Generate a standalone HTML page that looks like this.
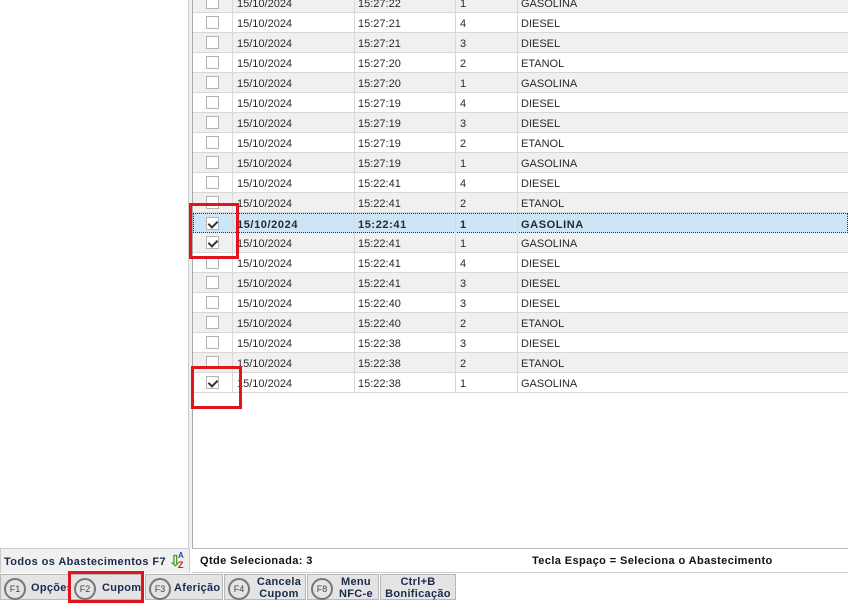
<!DOCTYPE html>
<html><head><meta charset="utf-8"><style>
*{margin:0;padding:0;box-sizing:border-box}
body{width:848px;height:600px;overflow:hidden;background:#fff;font-family:"Liberation Sans",Tahoma,sans-serif;font-size:11px;color:#2a2a2a;position:relative}
.abs{position:absolute}
.row{position:absolute;left:193px;width:655px;height:20px;border-bottom:1px solid #d8d8d8}
.row div{position:absolute;top:0;height:20px;line-height:22px;border-right:1px solid #d8d8d8}
.c0{left:0;width:40px}.c1{left:40px;width:122px;padding-left:4px}.c2{left:162px;width:101px;padding-left:3px}.c3{left:263px;width:62px;padding-left:4px}.c4{left:325px;width:330px;padding-left:3px;border-right:none!important}
.cb{position:absolute;left:13px;top:3px;width:13px;height:13px;border:1px solid #b4b4b4;background:#fff}
.chk::after{content:"";position:absolute;left:3px;top:1px;width:4px;height:7px;border:solid #333;border-width:0 2px 2px 0;transform:rotate(45deg)}
.sel{background:#cde6f7;font-weight:bold;border:1px dotted #333;letter-spacing:0.6px}
.b{font-weight:bold;letter-spacing:0.4px}
.red{position:absolute;border:3px solid #e0141a}
.btn{position:absolute;top:574px;height:26px;background:#e4e4e4;border:1px solid #b8b8b8;font-weight:bold;color:#1a2a4a;font-size:11px;letter-spacing:0.3px}
.k{position:absolute;top:3px;left:3px;width:22px;height:22px;border:2px solid #777;border-radius:50%;font-weight:normal;font-size:9px;line-height:18px;text-align:center;color:#444;letter-spacing:0}
.lb{position:absolute;top:0;line-height:27px}
.lb2{position:absolute;top:0;line-height:12px;text-align:center;padding-top:1px}
</style></head><body>
<div class="abs" style="left:0;top:0;width:189px;height:548px;background:#fff;border-right:1px solid #ccc"></div>
<div class="abs" style="left:189px;top:0;width:4px;height:548px;background:#f0f0f0;border-right:1px solid #aaa"></div>

<div class="row" style="top:-7px;background:#f0f0f0"><div class="c0"><span class="cb"></span></div><div class="c1">15/10/2024</div><div class="c2">15:27:22</div><div class="c3">1</div><div class="c4">GASOLINA</div></div>
<div class="row" style="top:13px"><div class="c0"><span class="cb"></span></div><div class="c1">15/10/2024</div><div class="c2">15:27:21</div><div class="c3">4</div><div class="c4">DIESEL</div></div>
<div class="row" style="top:33px;background:#f0f0f0"><div class="c0"><span class="cb"></span></div><div class="c1">15/10/2024</div><div class="c2">15:27:21</div><div class="c3">3</div><div class="c4">DIESEL</div></div>
<div class="row" style="top:53px"><div class="c0"><span class="cb"></span></div><div class="c1">15/10/2024</div><div class="c2">15:27:20</div><div class="c3">2</div><div class="c4">ETANOL</div></div>
<div class="row" style="top:73px;background:#f0f0f0"><div class="c0"><span class="cb"></span></div><div class="c1">15/10/2024</div><div class="c2">15:27:20</div><div class="c3">1</div><div class="c4">GASOLINA</div></div>
<div class="row" style="top:93px"><div class="c0"><span class="cb"></span></div><div class="c1">15/10/2024</div><div class="c2">15:27:19</div><div class="c3">4</div><div class="c4">DIESEL</div></div>
<div class="row" style="top:113px;background:#f0f0f0"><div class="c0"><span class="cb"></span></div><div class="c1">15/10/2024</div><div class="c2">15:27:19</div><div class="c3">3</div><div class="c4">DIESEL</div></div>
<div class="row" style="top:133px"><div class="c0"><span class="cb"></span></div><div class="c1">15/10/2024</div><div class="c2">15:27:19</div><div class="c3">2</div><div class="c4">ETANOL</div></div>
<div class="row" style="top:153px;background:#f0f0f0"><div class="c0"><span class="cb"></span></div><div class="c1">15/10/2024</div><div class="c2">15:27:19</div><div class="c3">1</div><div class="c4">GASOLINA</div></div>
<div class="row" style="top:173px"><div class="c0"><span class="cb"></span></div><div class="c1">15/10/2024</div><div class="c2">15:22:41</div><div class="c3">4</div><div class="c4">DIESEL</div></div>
<div class="row" style="top:193px;background:#f0f0f0"><div class="c0"><span class="cb"></span></div><div class="c1">15/10/2024</div><div class="c2">15:22:41</div><div class="c3">2</div><div class="c4">ETANOL</div></div>
<div class="row sel" style="top:213px"><div class="c0" style="left:-1px"><span class="cb chk"></span></div><div class="c1" style="left:39px">15/10/2024</div><div class="c2" style="left:161px">15:22:41</div><div class="c3" style="left:262px">1</div><div class="c4" style="left:324px">GASOLINA</div></div>
<div class="row" style="top:233px;background:#f0f0f0"><div class="c0"><span class="cb chk"></span></div><div class="c1">15/10/2024</div><div class="c2">15:22:41</div><div class="c3">1</div><div class="c4">GASOLINA</div></div>
<div class="row" style="top:253px"><div class="c0"><span class="cb"></span></div><div class="c1">15/10/2024</div><div class="c2">15:22:41</div><div class="c3">4</div><div class="c4">DIESEL</div></div>
<div class="row" style="top:273px;background:#f0f0f0"><div class="c0"><span class="cb"></span></div><div class="c1">15/10/2024</div><div class="c2">15:22:41</div><div class="c3">3</div><div class="c4">DIESEL</div></div>
<div class="row" style="top:293px"><div class="c0"><span class="cb"></span></div><div class="c1">15/10/2024</div><div class="c2">15:22:40</div><div class="c3">3</div><div class="c4">DIESEL</div></div>
<div class="row" style="top:313px;background:#f0f0f0"><div class="c0"><span class="cb"></span></div><div class="c1">15/10/2024</div><div class="c2">15:22:40</div><div class="c3">2</div><div class="c4">ETANOL</div></div>
<div class="row" style="top:333px"><div class="c0"><span class="cb"></span></div><div class="c1">15/10/2024</div><div class="c2">15:22:38</div><div class="c3">3</div><div class="c4">DIESEL</div></div>
<div class="row" style="top:353px;background:#f0f0f0"><div class="c0"><span class="cb"></span></div><div class="c1">15/10/2024</div><div class="c2">15:22:38</div><div class="c3">2</div><div class="c4">ETANOL</div></div>
<div class="row" style="top:373px"><div class="c0"><span class="cb chk"></span></div><div class="c1">15/10/2024</div><div class="c2">15:22:38</div><div class="c3">1</div><div class="c4">GASOLINA</div></div>

<div class="red" style="left:189px;top:203px;width:50px;height:56px"></div>
<div class="red" style="left:191px;top:366px;width:51px;height:43px"></div>

<div class="abs" style="left:0;top:548px;width:190px;height:26px;background:#f0f0f0;border:1px solid #ccc"></div>
<div class="abs b" style="left:4px;top:556px;color:#1a2a4a">Todos os Abastecimentos F7</div>
<div class="abs" style="left:168px;top:552px;width:18px;height:18px;font-size:9px">
<span style="position:absolute;left:1px;top:0;color:#4aa02c;font-size:15px;font-weight:bold">⇩</span>
<span style="position:absolute;left:10px;top:-1px;color:#2a4aa0;font-weight:bold;font-size:8px">A</span>
<span style="position:absolute;left:10px;top:8px;color:#c0202a;font-weight:bold;font-size:9px">Z</span></div>
<div class="abs" style="left:192px;top:548px;width:656px;height:25px;background:#fff;border-top:1px solid #bbb;border-bottom:1px solid #ccc"></div>
<div class="abs b" style="left:200px;top:555px;color:#111">Qtde Selecionada: 3</div>
<div class="abs b" style="left:532px;top:555px;color:#111">Tecla Espaço = Seleciona o Abastecimento</div>

<div class="abs" style="left:0;top:573px;width:848px;height:27px;background:#fff"></div>
<div class="btn" style="left:0;width:69px"><span class="k">F1</span><span class="lb" style="left:30px">Opções</span></div>
<div class="btn" style="left:70px;width:74px"><span class="k">F2</span><span class="lb" style="left:31px">Cupom</span></div>
<div class="btn" style="left:145px;width:78px"><span class="k">F3</span><span class="lb" style="left:28px">Aferição</span></div>
<div class="btn" style="left:224px;width:82px"><span class="k">F4</span><span class="lb2" style="left:28px;width:52px">Cancela<br>Cupom</span></div>
<div class="btn" style="left:307px;width:72px"><span class="k">F8</span><span class="lb2" style="left:28px;width:40px">Menu<br>NFC-e</span></div>
<div class="btn" style="left:380px;width:76px"><span class="lb2" style="left:0;width:74px">Ctrl+B<br>Bonificação</span></div>
<div class="red" style="left:68px;top:571px;width:76px;height:32px"></div>
</body></html>
